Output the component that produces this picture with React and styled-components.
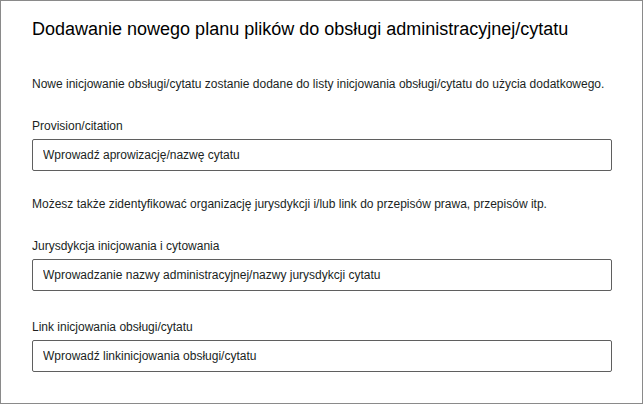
import React from 'react'
import styled, { createGlobalStyle } from 'styled-components'

const GlobalStyle = createGlobalStyle`
  html, body {
    margin: 0;
    padding: 0;
    background: #ffffff;
  }
  body {
    font-family: "Liberation Sans", Arial, sans-serif;
    color: #201f1e;
  }
`

const Panel = styled.div`
  box-sizing: border-box;
  width: 643px;
  height: 404px;
  border: 1px solid #8a8a8a;
  padding: 16px 31px 0 31px;
  display: flex;
  flex-direction: column;
`

const Title = styled.h1`
  margin: 0;
  font-size: 18px;
  font-weight: 400;
  line-height: 24px;
  color: #000000;
`

const Text = styled.p`
  margin: ${({ $top }) => $top}px 0 0 0;
  font-size: 12px;
  line-height: 18px;
  color: #201f1e;
`

const Field = styled.div`
  display: flex;
  flex-direction: column;
  gap: 4px;
  margin-top: ${({ $top }) => $top}px;
`

const Label = styled.label`
  font-size: 12px;
  line-height: 18px;
  color: #201f1e;
`

const Input = styled.input`
  box-sizing: border-box;
  width: 580px;
  height: 32px;
  margin: 0;
  padding: 0 10px;
  border: 1px solid #5f5f5f;
  border-radius: 2px;
  font-family: "Liberation Sans", Arial, sans-serif;
  font-size: 12px;
  color: #201f1e;
  background: #ffffff;
  outline: none;

  &::placeholder {
    color: #201f1e;
    opacity: 1;
  }
`

const fields = [
  {
    label: 'Provision/citation',
    placeholder: 'Wprowadź aprowizację/nazwę cytatu',
  },
  {
    label: 'Jurysdykcja inicjowania i cytowania',
    placeholder: 'Wprowadzanie nazwy administracyjnej/nazwy jurysdykcji cytatu',
  },
  {
    label: 'Link inicjowania obsługi/cytatu',
    placeholder: 'Wprowadź linkinicjowania obsługi/cytatu',
  },
]

export default function App() {
  return (
    <>
      <GlobalStyle />
      <Panel>
        <Title>Dodawanie nowego planu plików do obsługi administracyjnej/cytatu</Title>
        <Text $top={34}>
          Nowe inicjowanie obsługi/cytatu zostanie dodane do listy inicjowania obsługi/cytatu do użycia dodatkowego.
        </Text>
        <Field $top={24}>
          <Label>{fields[0].label}</Label>
          <Input placeholder={fields[0].placeholder} />
        </Field>
        <Text $top={24}>
          Możesz także zidentyfikować organizację jurysdykcji i/lub link do przepisów prawa, przepisów itp.
        </Text>
        <Field $top={24}>
          <Label>{fields[1].label}</Label>
          <Input placeholder={fields[1].placeholder} />
        </Field>
        <Field $top={27}>
          <Label>{fields[2].label}</Label>
          <Input placeholder={fields[2].placeholder} />
        </Field>
      </Panel>
    </>
  )
}
